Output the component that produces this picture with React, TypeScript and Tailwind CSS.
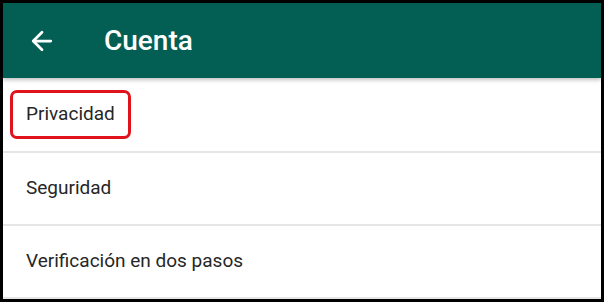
import { ArrowLeft } from "lucide-react";

const rows = ["Privacidad", "Seguridad", "Verificación en dos pasos"];

export default function App() {
  return (
    <div className="h-[302px] w-[604px] bg-black pb-[3px] pl-[3px] pr-[3px] pt-[3px] font-['Roboto',sans-serif]">
      <div className="flex h-full flex-col bg-white">
        <div className="relative z-10 flex h-[75px] shrink-0 items-center bg-[#035e54] shadow-[0_2px_4px_rgba(0,0,0,0.25)]">
          <ArrowLeft className="ml-[24px] h-[30px] w-[30px] text-white" strokeWidth={2.2} />
          <h1 className="ml-[47px] text-[28px] font-medium text-white">Cuenta</h1>
        </div>
        <div className="flex h-[75px] items-center border-b-2 border-[#e6e6e6] pl-[7px]">
          <span className="rounded-[7px] border-[3px] border-[#e0121c] px-[13px] py-[7px] text-[19px] text-[#262626]">
            {rows[0]}
          </span>
        </div>
        <div className="flex h-[73px] items-center border-b-2 border-[#e6e6e6] pl-[23px] text-[19px] text-[#262626]">
          {rows[1]}
        </div>
        <div className="flex h-[73px] items-center border-b-2 border-[#e6e6e6] pl-[23px] text-[19px] text-[#262626]">
          {rows[2]}
        </div>
      </div>
    </div>
  );
}
